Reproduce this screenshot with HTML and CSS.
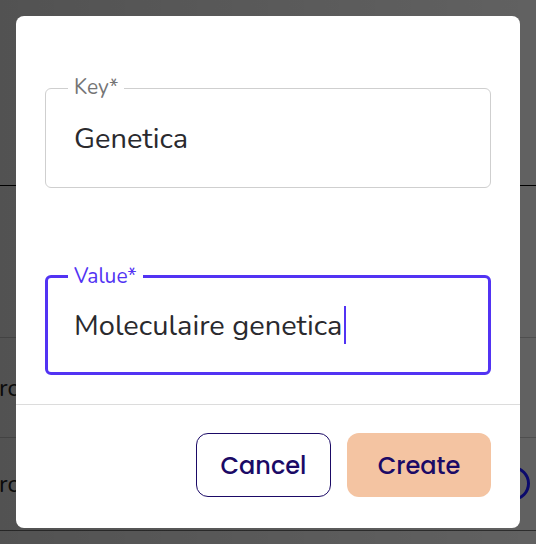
FILE: index.html
```html
<!DOCTYPE html>
<html lang="nl">
<head>
<meta charset="utf-8">
<title>Create</title>
<link rel="stylesheet" href="styles.css">
</head>
<body>
<div class="page">
  <div class="row row-head"></div>
  <div class="row row-a"><span class="cell">ro</span></div>
  <div class="row row-b"><span class="cell">ro</span><span class="ring"></span></div>
  <div class="row row-foot"></div>
</div>
<div class="backdrop"></div>
<div class="dialog">
  <div class="dialog-body">
    <div class="field">
      <span class="field-label">Key*</span>
      <span class="field-value">Genetica</span>
    </div>
    <div class="field field-focus">
      <span class="field-label">Value*</span>
      <span class="field-value">Moleculaire genetica<span class="caret"></span></span>
    </div>
  </div>
  <div class="dialog-actions">
    <button class="btn btn-outline">Cancel</button>
    <button class="btn btn-fill">Create</button>
  </div>
</div>
</body>
</html>
```
FILE: styles.css
```css
html, body {
  margin: 0;
  padding: 0;
}
body {
  width: 536px;
  height: 544px;
  overflow: hidden;
  position: relative;
  background: #fff;
  font-family: "Nunito", "Lato", "Noto Sans", sans-serif;
}
.page {
  display: flex;
  flex-direction: column;
  padding-top: 185px;
}
.row {
  border-top: 1px solid #d0d0d0;
  display: flex;
  align-items: center;
  justify-content: space-between;
  box-sizing: border-box;
}
.row-head { height: 152px; border-top-color: #000; }
.row-a { height: 100px; }
.row-b { height: 93px; }
.row-foot { height: 20px; border-top-color: #777; }
.cell {
  font-size: 24px;
  color: #222;
  margin-left: -1px;
}
.ring {
  position: relative;
  z-index: 1;
  width: 35px;
  height: 35px;
  border: 3px solid #0b0a6c;
  border-radius: 50%;
  box-sizing: border-box;
  margin-right: 6px;
  margin-top: -2px;
}
.backdrop {
  position: absolute;
  inset: 0;
  background: linear-gradient(90deg, rgba(0,0,0,0.68), rgba(0,0,0,0.62));
}
.dialog {
  position: absolute;
  z-index: 2;
  left: 16px;
  top: 16px;
  width: 504px;
  height: 512px;
  background: #fff;
  border-radius: 8px;
  display: flex;
  flex-direction: column;
}
.dialog-body {
  padding: 72px 29px 0;
  display: flex;
  flex-direction: column;
  gap: 87px;
  height: 389px;
  box-sizing: border-box;
  border-bottom: 1px solid #dcdcdc;
}
.field {
  position: relative;
  height: 100px;
  border: 1px solid #cfcfcf;
  border-radius: 6px;
  box-sizing: border-box;
  display: flex;
  align-items: center;
  padding: 0 28px;
}
.field-focus {
  border: 3px solid #5233f3;
  padding: 0 26px;
}
.field-label {
  position: absolute;
  left: 22px;
  top: -17px;
  padding: 0 6px;
  background: #fff;
  font-size: 21px;
  line-height: 30px;
  color: #757575;
}
.field-focus .field-label {
  left: 20px;
  top: -17px;
  color: #5233f3;
}
.field-value {
  font-size: 29px;
  color: #2a2a2e;
  margin-top: 0;
  display: flex;
  align-items: center;
}
.caret {
  display: inline-block;
  width: 2px;
  height: 38px;
  background: #5233f3;
  margin-left: 2px;
}
.dialog-actions {
  flex: 1;
  display: flex;
  justify-content: flex-end;
  align-items: flex-start;
  padding: 28px 29px 0;
  gap: 16px;
}
.btn {
  height: 64px;
  border-radius: 12px;
  font-family: "Poppins", "Inter", sans-serif;
  font-size: 24px;
  font-weight: 500;
  color: #1b0a66;
  box-sizing: border-box;
  cursor: pointer;
  padding: 0;
}
.btn-outline {
  width: 135px;
  background: #fff;
  border: 1px solid #1b0a66;
}
.btn-fill {
  width: 144px;
  background: #f4c4a2;
  border: none;
}
```
